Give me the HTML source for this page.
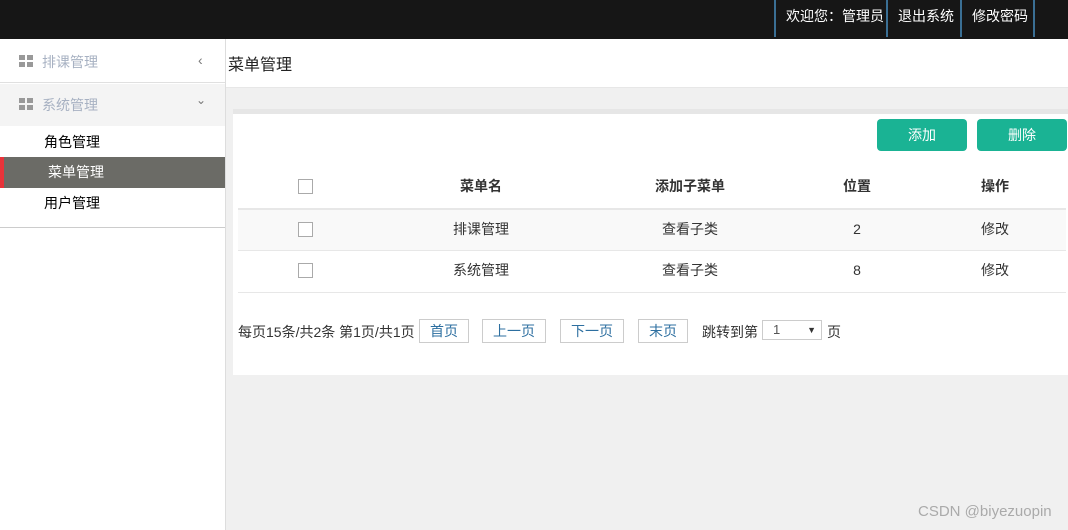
<!DOCTYPE html>
<html><head><meta charset="utf-8"><style>
*{margin:0;padding:0;box-sizing:border-box}
body{width:1068px;height:530px;overflow:hidden;background:#f0f0f0;font-family:"Liberation Sans","Microsoft YaHei","Noto Sans CJK SC",sans-serif;font-size:14px;color:#333;position:relative}
.top{position:absolute;left:0;top:0;width:1068px;height:39px;background:#161616}
.top .n{position:absolute;top:0;height:37px;line-height:33px;color:#fff;font-size:14px;border-left:2px solid #3a6f94;padding:0 10px}
.side{position:absolute;left:0;top:39px;width:226px;height:491px;background:#fff;border-right:1px solid #ddd}
.m{position:absolute;left:0;width:225px;color:#a7b1c2;font-size:14px}
.ic{position:absolute;left:19px;width:14px;height:12px;background:linear-gradient(#999,#999) 0 0/6px 5px no-repeat,linear-gradient(#999,#999) 8px 0/6px 5px no-repeat,linear-gradient(#999,#999) 0 7px/6px 5px no-repeat,linear-gradient(#999,#999) 8px 7px/6px 5px no-repeat}
.sub{position:absolute;left:0;width:225px;height:31px;line-height:31px;padding-left:44px;color:#000}
.main{position:absolute;left:226px;top:39px;width:842px;height:49px;background:#fff;border-bottom:1px solid #e7e7e7}
.card{position:absolute;left:233px;top:114px;width:835px;height:261px;background:#fff}
.btn{position:absolute;top:119px;width:90px;height:32px;background:#1ab394;color:#fff;border-radius:4px;text-align:center;line-height:32px}
.row{position:absolute;left:238px;width:828px;height:42px;border-bottom:1px solid #e7e7e7}
.row span{position:absolute;top:0;line-height:38px;transform:translateX(-50%);white-space:nowrap}
.cb{position:absolute;left:60px;top:12px;width:15px;height:15px;border:1px solid #aaa;background:#fff}
.pg{position:absolute;top:319px;height:24px;border:1px solid #ccc;line-height:22px;text-align:center;color:#2d6fa0;background:#fff}
</style></head><body>
<div class="top">
<div class="n" style="left:774px">欢迎您：管理员</div>
<div class="n" style="left:886px">退出系统</div>
<div class="n" style="left:960px">修改密码</div>
<div class="n" style="left:1033px;padding:0"></div>
</div>
<div class="side">
<div class="m" style="top:0;height:44px;border-bottom:1px solid #e0e0e0"><div class="ic" style="top:16px"></div><span style="position:absolute;left:42px;top:13px">排课管理</span><span style="position:absolute;left:198px;top:13px;color:#777">‹</span></div>
<div class="m" style="top:45px;height:42px;background:#f4f4f4"><div class="ic" style="top:14px"></div><span style="position:absolute;left:42px;top:11px">系统管理</span><span style="position:absolute;left:196px;top:9px;color:#777;font-size:12px">⌄</span></div>
<div class="sub" style="top:88px">角色管理</div>
<div class="sub" style="top:118px;background:#6b6b66;color:#fff;padding-left:44px;border-left:4px solid #e8333a">菜单管理</div>
<div class="sub" style="top:149px">用户管理</div>
<div style="position:absolute;left:0;top:188px;width:225px;border-top:1px solid #ccc"></div>
</div>
<div class="main"><span style="position:absolute;left:2px;top:12px;font-size:16px;color:#222">菜单管理</span></div>
<div style="position:absolute;left:233px;top:109px;width:835px;height:5px;background:#e6e6e6"></div>
<div class="card"></div>
<div class="btn" style="left:877px">添加</div>
<div class="btn" style="left:977px">删除</div>
<div class="row" style="top:165px;height:44px;font-weight:bold"><div class="cb" style="top:14px"></div><span style="left:243px;line-height:42px">菜单名</span><span style="left:452px;line-height:42px">添加子菜单</span><span style="left:619px;line-height:42px">位置</span><span style="left:757px;line-height:42px">操作</span></div>
<div class="row" style="top:209px;background:#f9f9f9;border-top:1px solid #e7e7e7"><div class="cb"></div><span style="left:243px">排课管理</span><span style="left:452px">查看子类</span><span style="left:619px">2</span><span style="left:757px">修改</span></div>
<div class="row" style="top:251px"><div class="cb"></div><span style="left:243px">系统管理</span><span style="left:452px">查看子类</span><span style="left:619px">8</span><span style="left:757px">修改</span></div>
<div style="position:absolute;left:238px;top:322px">每页15条/共2条 第1页/共1页</div>
<div class="pg" style="left:419px;width:50px">首页</div>
<div class="pg" style="left:482px;width:64px">上一页</div>
<div class="pg" style="left:560px;width:64px">下一页</div>
<div class="pg" style="left:638px;width:50px">末页</div>
<div style="position:absolute;left:702px;top:322px">跳转到第</div>
<div style="position:absolute;left:762px;top:320px;width:60px;height:20px;border:1px solid #ccc;background:#fff;font-size:13px;line-height:18px;padding-left:10px;color:#555">1<span style="position:absolute;right:5px;font-size:9px;color:#333">▼</span></div>
<div style="position:absolute;left:827px;top:322px">页</div>
<div style="position:absolute;left:918px;top:503px;color:#aaa;font-size:15px">CSDN @biyezuopin</div>
</body></html>
